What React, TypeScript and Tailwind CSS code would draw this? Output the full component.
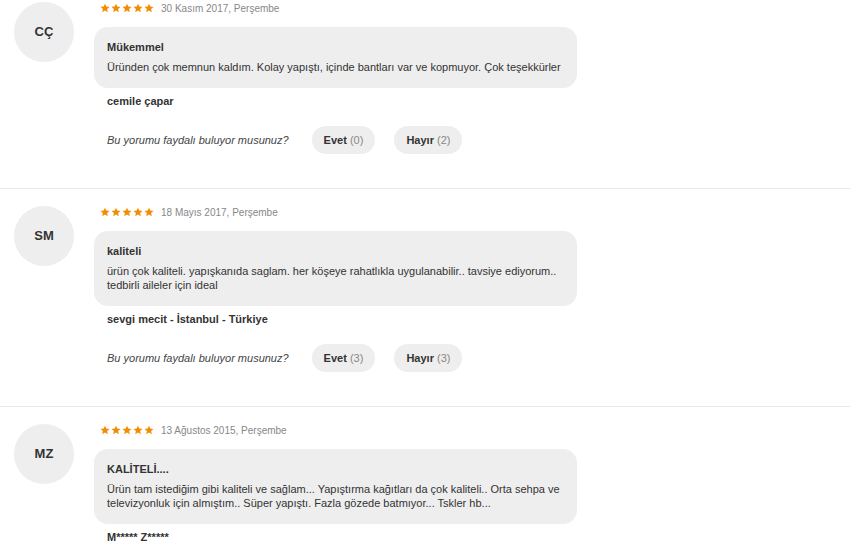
import React from "react";

type Review = {
  initials: string;
  date: string;
  title: string;
  body: string;
  name: string;
  yes: number;
  no: number;
};

const reviews: Review[] = [
  {
    initials: "CÇ",
    date: "30 Kasım 2017, Perşembe",
    title: "Mükemmel",
    body: "Üründen çok memnun kaldım. Kolay yapıştı, içinde bantları var ve kopmuyor. Çok teşekkürler",
    name: "cemile çapar",
    yes: 0,
    no: 2,
  },
  {
    initials: "SM",
    date: "18 Mayıs 2017, Perşembe",
    title: "kaliteli",
    body: "ürün çok kaliteli. yapışkanıda saglam. her köşeye rahatlıkla uygulanabilir.. tavsiye ediyorum.. tedbirli aileler için ideal",
    name: "sevgi mecit - İstanbul - Türkiye",
    yes: 3,
    no: 3,
  },
  {
    initials: "MZ",
    date: "13 Ağustos 2015, Perşembe",
    title: "KALİTELİ....",
    body: "Ürün tam istediğim gibi kaliteli ve sağlam... Yapıştırma kağıtları da çok kaliteli.. Orta sehpa ve televizyonluk için almıştım.. Süper yapıştı. Fazla gözede batmıyor... Tskler hb...",
    name: "M***** Z*****",
    yes: 1,
    no: 0,
  },
];

function Star() {
  return (
    <svg width="10" height="10" viewBox="0 0 24 24" fill="#f28c00">
      <path d="M12 1.5l3.1 7.1 7.7.7-5.8 5.1 1.7 7.6L12 18l-6.7 4 1.7-7.6-5.8-5.1 7.7-.7z" />
    </svg>
  );
}

function ReviewItem({ review, first }: { review: Review; first: boolean }) {
  return (
    <div
      className={`flex pl-[14px] pb-[34px] border-b border-[#e8e8e8] ${
        first ? "pt-[2px]" : "pt-[17px]"
      }`}
    >
      <div className="w-[60px] h-[60px] shrink-0 rounded-full bg-[#eeeeee] flex items-center justify-center text-[13px] font-bold text-[#333]">
        {review.initials}
      </div>
      <div className="ml-[20px] w-[483px]">
        <div className="flex items-center h-[12px] pl-[6px]">
          <div className="flex gap-[1px]">
            <Star />
            <Star />
            <Star />
            <Star />
            <Star />
          </div>
          <span className="ml-[7px] text-[10px] text-[#888]">{review.date}</span>
        </div>
        <div className="mt-[13px] rounded-[14px] bg-[#eeeeee] px-[13px] pt-[13px] pb-[14px]">
          <p className="text-[11px] leading-[14px] font-bold text-[#333]">{review.title}</p>
          <p className="mt-[6px] text-[11px] leading-[14px] text-[#333]">{review.body}</p>
        </div>
        <p className="mt-[6px] pl-[13px] text-[11px] leading-[14px] font-bold text-[#333]">
          {review.name}
        </p>
        <div className="mt-[18px] pl-[13px] flex items-center">
          <span className="text-[11px] italic text-[#444]">Bu yorumu faydalı buluyor musunuz?</span>
          <button className="ml-[23px] h-[28px] px-[12px] rounded-full bg-[#eeeeee] text-[11px]">
            <span className="font-bold text-[#333]">Evet</span>{" "}
            <span className="text-[#888]">({review.yes})</span>
          </button>
          <button className="ml-[19px] h-[28px] px-[12px] rounded-full bg-[#eeeeee] text-[11px]">
            <span className="font-bold text-[#333]">Hayır</span>{" "}
            <span className="text-[#888]">({review.no})</span>
          </button>
        </div>
      </div>
    </div>
  );
}

export default function App() {
  return (
    <div className="w-[850px] h-[545px] overflow-hidden bg-white font-['Liberation_Sans',Arial,sans-serif]">
      {reviews.map((r, i) => (
        <ReviewItem key={r.initials} review={r} first={i === 0} />
      ))}
    </div>
  );
}
